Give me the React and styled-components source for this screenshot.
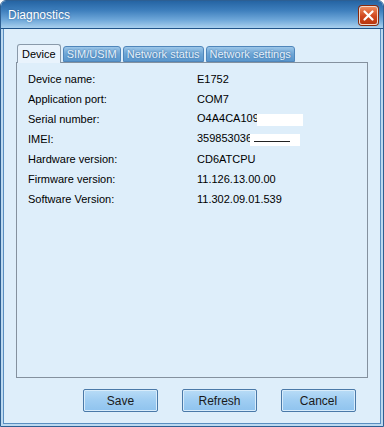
import React from "react";
import styled, { createGlobalStyle } from "styled-components";

const Global = createGlobalStyle`
  html, body { margin: 0; padding: 0; background: #ffffff; }
  body { font-family: Tahoma, "DejaVu Sans", "Liberation Sans", sans-serif; }
`;

const Window = styled.div`
  width: 384px;
  height: 427px;
  box-sizing: border-box;
  display: flex;
  flex-direction: column;
  border: 1px solid #2d5f93;
  border-radius: 6px 6px 0 0;
  background: #bcd9f0;
  padding: 0 2px 2px 2px;
  overflow: hidden;
`;

const TitleBar = styled.div`
  height: 27px;
  margin: 0 -2px;
  padding: 0 5px 0 7px;
  display: flex;
  align-items: center;
  justify-content: space-between;
  background: linear-gradient(#2564a3 0%, #3e7fbd 35%, #6ea7d9 70%, #a9d0ee 100%);
  border-bottom: 1px solid #1f5288;
  border-radius: 5px 5px 0 0;
`;

const Title = styled.span`
  color: #ffffff;
  font-family: "Liberation Sans", Arial, sans-serif;
  font-size: 12px;
  text-shadow: 0 0 2px rgba(0, 30, 70, 0.4);
`;

const CloseButton = styled.div`
  width: 19px;
  height: 19px;
  margin-top: 2px;
  box-sizing: border-box;
  border: 1px solid #f3d6c8;
  border-radius: 3px;
  background: linear-gradient(#ee8a5c, #d0471f 55%, #b8360f);
  display: flex;
  align-items: center;
  justify-content: center;
  box-shadow: 0 0 0 1px #8a2a0c;
`;

const Body = styled.div`
  flex: 1;
  display: flex;
  flex-direction: column;
  background: #deeefa;
  border: 1px solid #5a8ec0;
  border-top: none;
  padding: 15px 12px 10px 12px;
`;

const TabRow = styled.div`
  display: flex;
  align-items: flex-end;
  height: 18px;
  padding-left: 1px;
  gap: 2px;
  position: relative;
  z-index: 1;
`;

const Tab = styled.div`
  height: ${(p) => (p.$active ? "19px" : "16px")};
  margin-bottom: ${(p) => (p.$active ? "-1px" : "0")};
  box-sizing: border-box;
  padding: 0 ${(p) => (p.$active ? "4px" : "3px")};
  display: flex;
  align-items: center;
  font-family: "Liberation Sans", Arial, sans-serif;
  font-size: 11px;
  border: 1px solid ${(p) => (p.$active ? "#8a9aaa" : "#4f86bb")};
  border-bottom: ${(p) => (p.$active ? "none" : "1px solid #4f86bb")};
  border-radius: 3px 3px 0 0;
  color: ${(p) => (p.$active ? "#000000" : "#e4f1fc")};
  background: ${(p) =>
    p.$active ? "#e9f3fc" : "linear-gradient(#9cc6e8, #6ea6d6 50%, #5a97cd)"};
  text-shadow: ${(p) => (p.$active ? "none" : "0 0 2px #2c5f92")};
`;

const Panel = styled.div`
  height: 316px;
  box-sizing: border-box;
  border: 1px solid #84919e;
  background: #deeefa;
  padding: 6px 0 0 11px;
  display: flex;
  flex-direction: column;
`;

const Row = styled.div`
  display: grid;
  grid-template-columns: 169px 1fr;
  height: 20px;
  align-items: center;
  font-family: "Liberation Sans", Arial, sans-serif;
  font-size: 11px;
  color: #000000;
`;

const Redact = styled.span`
  display: inline-block;
  position: relative;
  width: ${(p) => p.$w}px;
  height: 12px;
  background: #ffffff;
  vertical-align: middle;
  margin-left: -2px;

  &::after {
    content: "";
    display: ${(p) => (p.$scribble ? "block" : "none")};
    position: absolute;
    left: 4px;
    top: 7px;
    width: 36px;
    height: 1px;
    background: #222222;
  }
`;

const Buttons = styled.div`
  display: flex;
  justify-content: flex-end;
  gap: 24px;
  padding: 11px 12px 0 0;
`;

const Button = styled.div`
  width: 75px;
  height: 23px;
  box-sizing: border-box;
  border: 1px solid #4a79a8;
  border-radius: 2px;
  background: linear-gradient(#b9dcf6, #9fcdf2 50%, #8fc3ee);
  display: flex;
  align-items: center;
  justify-content: center;
  font-family: "Liberation Sans", Arial, sans-serif;
  font-size: 12px;
  color: #1a1a1a;
  box-shadow: inset 0 0 0 1px #d8ecfb;
`;

const rows = [
  ["Device name:", "E1752"],
  ["Application port:", "COM7"],
  ["Serial number:", "O4A4CA109", 46],
  ["IMEI:", "359853036", 50, true],
  ["Hardware version:", "CD6ATCPU"],
  ["Firmware version:", "11.126.13.00.00"],
  ["Software Version:", "11.302.09.01.539"],
];

export default function App() {
  return (
    <>
      <Global />
      <Window>
        <TitleBar>
          <Title>Diagnostics</Title>
          <CloseButton>
            <svg width="11" height="11" viewBox="0 0 11 11">
              <path d="M1.5 1.5 L9.5 9.5 M9.5 1.5 L1.5 9.5" stroke="#ffffff" strokeWidth="2.2" strokeLinecap="round" />
            </svg>
          </CloseButton>
        </TitleBar>
        <Body>
          <TabRow>
            <Tab $active>Device</Tab>
            <Tab>SIM/USIM</Tab>
            <Tab>Network status</Tab>
            <Tab>Network settings</Tab>
          </TabRow>
          <Panel>
            {rows.map(([label, value, redact, scribble]) => (
              <Row key={label}>
                <span>{label}</span>
                <span>
                  {value}
                  {redact ? <Redact $w={redact} $scribble={scribble} /> : null}
                </span>
              </Row>
            ))}
          </Panel>
          <Buttons>
            <Button>Save</Button>
            <Button>Refresh</Button>
            <Button>Cancel</Button>
          </Buttons>
        </Body>
      </Window>
    </>
  );
}
